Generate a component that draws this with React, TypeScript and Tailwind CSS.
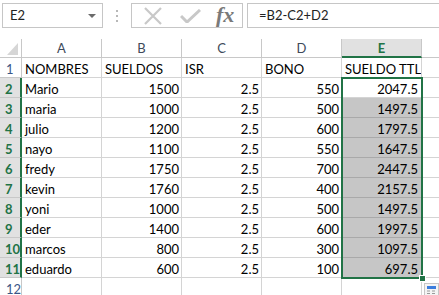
import React from 'react';

const rows: [string, string, string, string, string][] = [
  ['Mario', '1500', '2.5', '550', '2047.5'],
  ['maria', '1000', '2.5', '500', '1497.5'],
  ['julio', '1200', '2.5', '600', '1797.5'],
  ['nayo', '1100', '2.5', '550', '1647.5'],
  ['fredy', '1750', '2.5', '700', '2447.5'],
  ['kevin', '1760', '2.5', '400', '2157.5'],
  ['yoni', '1000', '2.5', '500', '1497.5'],
  ['eder', '1400', '2.5', '600', '1997.5'],
  ['marcos', '800', '2.5', '300', '1097.5'],
  ['eduardo', '600', '2.5', '100', '697.5'],
];

const headers = ['NOMBRES', 'SUELDOS', 'ISR', 'BONO', 'SUELDO TTL'];
const cols = ['A', 'B', 'C', 'D', 'E'];

const cell = 'h-5 border-r border-b border-[#d4d4d4] leading-[22px] overflow-hidden whitespace-nowrap text-black';

function FormulaBar() {
  return (
    <div className="flex items-start h-[39px] pt-[3px]">
      <div className="ml-[2px] w-[101px] h-[25px] border border-[#c6c6c6] flex items-center justify-between pl-[7px] pr-[6px] text-[#222]">
        <span className="leading-none">E2</span>
        <svg width="8" height="4" viewBox="0 0 8 4">
          <path d="M0 0h8L4 4z" fill="#6b6b6b" />
        </svg>
      </div>
      <div className="w-[28px] h-[25px] flex flex-col items-center justify-center gap-[3px]">
        <span className="w-[2px] h-[2px] bg-[#b8b8b8]" />
        <span className="w-[2px] h-[2px] bg-[#b8b8b8]" />
        <span className="w-[2px] h-[2px] bg-[#b8b8b8]" />
      </div>
      <div className="w-[112px] h-[25px] border border-[#c6c6c6] flex items-center">
        <svg className="ml-[11px]" width="20" height="18" viewBox="0 0 20 18">
          <path d="M2 1l16 16M18 1L2 17" stroke="#c8c8c8" strokeWidth="2.2" fill="none" />
        </svg>
        <svg className="ml-[17px]" width="21" height="14" viewBox="0 0 21 14">
          <path d="M1 7l6 6L20 1" stroke="#c8c8c8" strokeWidth="3" fill="none" />
        </svg>
        <span className="ml-[15px] text-[22px] leading-none italic font-bold text-[#7a7a7a] font-['Liberation_Serif',serif] -mt-[2px]">
          fx
        </span>
      </div>
      <div className="ml-[4px] flex-1 h-[25px] border border-r-0 border-[#c6c6c6] flex items-center pl-[11px] text-[#222]">
        <span className="leading-none">=B2-C2+D2</span>
      </div>
    </div>
  );
}

function QuickAnalysis() {
  return (
    <svg width="15" height="13" viewBox="0 0 15 13">
      <rect x="0.5" y="0.5" width="14" height="12" fill="#f4f4f4" stroke="#c6c6c6" />
      <rect x="3" y="3" width="9" height="3" fill="#3b7ddd" />
      <path d="M3 8h3M8 8h3M3 10.5h3M8 10.5h3" stroke="#9a9a9a" strokeWidth="1" />
    </svg>
  );
}

export default function App() {
  return (
    <div className="w-[439px] h-[295px] overflow-hidden bg-white font-['Lato',sans-serif] text-[13px]">
      <FormulaBar />
      <div className="relative">
        <div className="grid grid-cols-[22px_80px_80px_80px_80px_80px_1fr]">
          {/* column headers */}
          <div className="h-[19px] border-r border-b border-[#c8c8c8] relative">
            <svg className="absolute left-[7px] top-[4px]" width="11" height="12" viewBox="0 0 11 12">
              <path d="M11 0v12H0z" fill="#d6d6d6" />
            </svg>
          </div>
          {cols.map((c) =>
            c === 'E' ? (
              <div
                key={c}
                className="h-[19px] bg-[#e1e1e1] border-r border-[#c8c8c8] border-b-2 border-b-[#217346] text-center leading-[19px] font-bold text-[#217346]"
              >
                {c}
              </div>
            ) : (
              <div key={c} className="h-[19px] border-r border-b border-[#c8c8c8] text-center leading-[19px] text-[#404a5a]">
                {c}
              </div>
            )
          )}
          <div className="h-[19px] border-b border-[#c8c8c8]" />

          {/* row 1 */}
          <div className="h-5 border-r border-b border-[#c8c8c8] leading-[22px] pl-[6px] text-[#3a5688]">1</div>
          {headers.map((h) => (
            <div key={h} className={`${cell} pl-[3px]`}>
              {h}
            </div>
          ))}
          <div className="h-5 border-b border-[#d4d4d4]" />

          {rows.map((r, i) => (
            <React.Fragment key={i}>
              <div className="h-5 bg-[#e1e1e1] border-r-2 border-r-[#217346] border-b border-[#c8c8c8] leading-[22px] pl-[5px] font-bold text-[#217346]">
                {i + 2}
              </div>
              <div className={`${cell} pl-[3px]`}>{r[0]}</div>
              <div className={`${cell} text-right pr-[2px]`}>{r[1]}</div>
              <div className={`${cell} text-right pr-[2px]`}>{r[2]}</div>
              <div className={`${cell} text-right pr-[2px]`}>{r[3]}</div>
              <div
                className={`h-5 border-r border-b leading-[22px] overflow-hidden text-right pr-[3px] text-black ${
                  i === 0 ? 'bg-white border-[#d4d4d4]' : 'bg-[#c6c6c6] border-[#a9a9a9]'
                }`}
              >
                {r[4]}
              </div>
              <div className="h-5 border-b border-[#d4d4d4]" />
            </React.Fragment>
          ))}

          {/* row 12 */}
          <div className="h-5 border-r border-[#c8c8c8] leading-[22px] pl-[6px] text-[#3a5688]">12</div>
          <div className="h-5 border-r border-[#d4d4d4]" />
          <div className="h-5 border-r border-[#d4d4d4]" />
          <div className="h-5 border-r border-[#d4d4d4]" />
          <div className="h-5 border-r border-[#d4d4d4]" />
          <div className="h-5 border-r border-[#d4d4d4]" />
          <div className="h-5" />
        </div>

        {/* selection E2:E11 */}
        <div className="absolute left-[341px] top-[38px] w-[82px] h-[202px] border-2 border-[#217346] pointer-events-none" />
        <div className="absolute left-[419px] top-[236px] w-[7px] h-[7px] bg-[#217346] border border-white" />
        <div className="absolute left-[424px] top-[244px]">
          <QuickAnalysis />
        </div>
      </div>
    </div>
  );
}
